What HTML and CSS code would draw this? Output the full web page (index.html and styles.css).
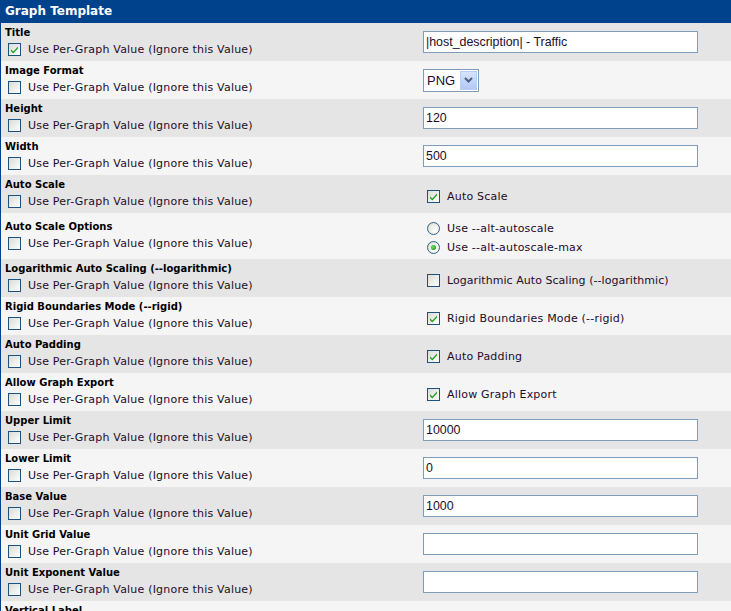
FILE: index.html
```html
<!DOCTYPE html>
<html>
<head>
<meta charset="utf-8">
<link rel="stylesheet" href="styles.css">
</head>
<body>
<div class="panel">
  <div class="head">Graph Template</div>

  <div class="row dark">
    <div class="lcell"><div class="lbl">Title</div><div class="opt"><span class="cb on"><svg viewBox="0 0 11 11"><path d="M2 5.2 L4.3 7.6 L9 2.6 L9 4.6 L4.3 9.6 L2 7.2 Z"/></svg></span><span class="otext">Use Per-Graph Value (Ignore this Value)</span></div></div>
    <div class="rcell"><div class="tb">|host_description| - Traffic</div></div>
  </div>

  <div class="row light">
    <div class="lcell"><div class="lbl">Image Format</div><div class="opt"><span class="cb"></span><span class="otext">Use Per-Graph Value (Ignore this Value)</span></div></div>
    <div class="rcell"><div class="sel"><span class="selv">PNG</span><span class="selbtn"><svg viewBox="0 0 9 6"><path d="M1 1 L4.5 4.5 L8 1"/></svg></span></div></div>
  </div>

  <div class="row dark">
    <div class="lcell"><div class="lbl">Height</div><div class="opt"><span class="cb"></span><span class="otext">Use Per-Graph Value (Ignore this Value)</span></div></div>
    <div class="rcell"><div class="tb">120</div></div>
  </div>

  <div class="row light">
    <div class="lcell"><div class="lbl">Width</div><div class="opt"><span class="cb"></span><span class="otext">Use Per-Graph Value (Ignore this Value)</span></div></div>
    <div class="rcell"><div class="tb">500</div></div>
  </div>

  <div class="row dark">
    <div class="lcell"><div class="lbl">Auto Scale</div><div class="opt"><span class="cb"></span><span class="otext">Use Per-Graph Value (Ignore this Value)</span></div></div>
    <div class="rcell"><div class="ropt"><span class="cb on"><svg viewBox="0 0 11 11"><path d="M2 5.2 L4.3 7.6 L9 2.6 L9 4.6 L4.3 9.6 L2 7.2 Z"/></svg></span><span class="otext">Auto Scale</span></div></div>
  </div>

  <div class="row light tall">
    <div class="lcell"><div class="lbl">Auto Scale Options</div><div class="opt"><span class="cb"></span><span class="otext">Use Per-Graph Value (Ignore this Value)</span></div></div>
    <div class="rcell">
      <div class="ropt radline"><span class="rd"></span><span class="otext">Use --alt-autoscale</span></div>
      <div class="ropt radline"><span class="rd on"></span><span class="otext">Use --alt-autoscale-max</span></div>
    </div>
  </div>

  <div class="row dark">
    <div class="lcell"><div class="lbl">Logarithmic Auto Scaling (--logarithmic)</div><div class="opt"><span class="cb"></span><span class="otext">Use Per-Graph Value (Ignore this Value)</span></div></div>
    <div class="rcell"><div class="ropt"><span class="cb"></span><span class="otext narrow">Logarithmic Auto Scaling (--logarithmic)</span></div></div>
  </div>

  <div class="row light">
    <div class="lcell"><div class="lbl">Rigid Boundaries Mode (--rigid)</div><div class="opt"><span class="cb"></span><span class="otext">Use Per-Graph Value (Ignore this Value)</span></div></div>
    <div class="rcell"><div class="ropt"><span class="cb on"><svg viewBox="0 0 11 11"><path d="M2 5.2 L4.3 7.6 L9 2.6 L9 4.6 L4.3 9.6 L2 7.2 Z"/></svg></span><span class="otext">Rigid Boundaries Mode (--rigid)</span></div></div>
  </div>

  <div class="row dark">
    <div class="lcell"><div class="lbl">Auto Padding</div><div class="opt"><span class="cb"></span><span class="otext">Use Per-Graph Value (Ignore this Value)</span></div></div>
    <div class="rcell"><div class="ropt"><span class="cb on"><svg viewBox="0 0 11 11"><path d="M2 5.2 L4.3 7.6 L9 2.6 L9 4.6 L4.3 9.6 L2 7.2 Z"/></svg></span><span class="otext">Auto Padding</span></div></div>
  </div>

  <div class="row light">
    <div class="lcell"><div class="lbl">Allow Graph Export</div><div class="opt"><span class="cb"></span><span class="otext">Use Per-Graph Value (Ignore this Value)</span></div></div>
    <div class="rcell"><div class="ropt"><span class="cb on"><svg viewBox="0 0 11 11"><path d="M2 5.2 L4.3 7.6 L9 2.6 L9 4.6 L4.3 9.6 L2 7.2 Z"/></svg></span><span class="otext">Allow Graph Export</span></div></div>
  </div>

  <div class="row dark">
    <div class="lcell"><div class="lbl">Upper Limit</div><div class="opt"><span class="cb"></span><span class="otext">Use Per-Graph Value (Ignore this Value)</span></div></div>
    <div class="rcell"><div class="tb">10000</div></div>
  </div>

  <div class="row light">
    <div class="lcell"><div class="lbl">Lower Limit</div><div class="opt"><span class="cb"></span><span class="otext">Use Per-Graph Value (Ignore this Value)</span></div></div>
    <div class="rcell"><div class="tb">0</div></div>
  </div>

  <div class="row dark">
    <div class="lcell"><div class="lbl">Base Value</div><div class="opt"><span class="cb"></span><span class="otext">Use Per-Graph Value (Ignore this Value)</span></div></div>
    <div class="rcell"><div class="tb">1000</div></div>
  </div>

  <div class="row light">
    <div class="lcell"><div class="lbl">Unit Grid Value</div><div class="opt"><span class="cb"></span><span class="otext">Use Per-Graph Value (Ignore this Value)</span></div></div>
    <div class="rcell"><div class="tb"></div></div>
  </div>

  <div class="row dark">
    <div class="lcell"><div class="lbl">Unit Exponent Value</div><div class="opt"><span class="cb"></span><span class="otext">Use Per-Graph Value (Ignore this Value)</span></div></div>
    <div class="rcell"><div class="tb"></div></div>
  </div>

  <div class="row light">
    <div class="lcell"><div class="lbl">Vertical Label</div><div class="opt"><span class="cb"></span><span class="otext">Use Per-Graph Value (Ignore this Value)</span></div></div>
    <div class="rcell"></div>
  </div>
</div>
</body>
</html>
```

FILE: styles.css
```css
html, body {
  margin: 0;
  padding: 0;
  background: #ffffff;
}
body {
  font-family: "DejaVu Sans", Verdana, sans-serif;
  font-size: 10px;
  color: #000;
  overflow: hidden;
}
.panel {
  border-left: 1px solid #00438c;
}
.head {
  height: 23px;
  box-sizing: border-box;
  background: #00438c;
  color: #fff;
  font-weight: bold;
  font-size: 12px;
  line-height: 23px;
  padding-left: 4px;
}
.row {
  display: grid;
  grid-template-columns: 416px 1fr;
  align-items: center;
  height: 38px;
}
.row.tall {
  height: 46px;
}
.dark { background: #e5e5e5; }
.light { background: #f5f5f5; }
.lcell {
  padding-left: 4px;
}
.lbl {
  font-weight: bold;
  font-size: 10px;
  line-height: 14px;
  height: 14px;
  white-space: nowrap;
}
.opt {
  display: flex;
  align-items: center;
  height: 17px;
  padding-top: 1px;
  white-space: nowrap;
}
.opt .cb {
  margin-left: 3px;
}
.otext {
  margin-left: 7px;
  font-size: 11px;
  letter-spacing: 0.2px;
  color: #1e0c2a;
}
.otext.narrow {
  letter-spacing: 0.05px;
}
.cb {
  box-sizing: border-box;
  width: 13px;
  height: 13px;
  border: 1px solid #1c5180;
  background: linear-gradient(135deg, #dcdcd6 0%, #f0f0ec 60%, #ffffff 100%);
  display: inline-flex;
  align-items: center;
  justify-content: center;
  flex: none;
}
.cb svg {
  width: 11px;
  height: 11px;
  fill: #21a121;
}
.rcell {
  padding-left: 6px;
}
.tb {
  box-sizing: border-box;
  width: 275px;
  height: 22px;
  border: 1px solid #7f9db9;
  background: #fff;
  font-family: "Liberation Sans", Arial, sans-serif;
  font-size: 12.4px;
  line-height: 20px;
  padding-left: 2px;
  color: #1e0c2a;
  white-space: nowrap;
}
.sel {
  box-sizing: border-box;
  width: 56px;
  height: 23px;
  border: 1px solid #7f9db9;
  background: #fff;
  display: flex;
  align-items: center;
  padding: 1px;
}
.selv {
  flex: 1;
  font-family: "Liberation Sans", Arial, sans-serif;
  font-size: 13px;
  padding-left: 2px;
  color: #1e0c2a;
}
.selbtn {
  width: 17px;
  height: 19px;
  box-sizing: border-box;
  background: linear-gradient(180deg, #d6e3fb 0%, #c1d3fb 60%, #b4c8f6 100%);
  border: 1px solid #b9cdf7;
  display: flex;
  align-items: center;
  justify-content: center;
}
.selbtn svg {
  width: 9px;
  height: 6px;
  fill: none;
  stroke: #4d6185;
  stroke-width: 2;
}
.ropt {
  display: flex;
  align-items: center;
  white-space: nowrap;
  padding-left: 4px;
  padding-top: 4px;
}
.radline {
  height: 19px;
  padding-top: 0;
  position: relative;
  top: 2px;
}
.rd {
  box-sizing: border-box;
  width: 13px;
  height: 13px;
  border-radius: 50%;
  border: 1px solid #2c628b;
  background: radial-gradient(circle at 65% 65%, #ffffff 0%, #f0f0ec 45%, #d4d4cc 100%);
  display: inline-flex;
  align-items: center;
  justify-content: center;
  flex: none;
}
.rd.on::after {
  content: "";
  width: 5px;
  height: 5px;
  border-radius: 50%;
  background: radial-gradient(circle at 40% 40%, #6fe06f 0%, #21a121 70%);
}
```
